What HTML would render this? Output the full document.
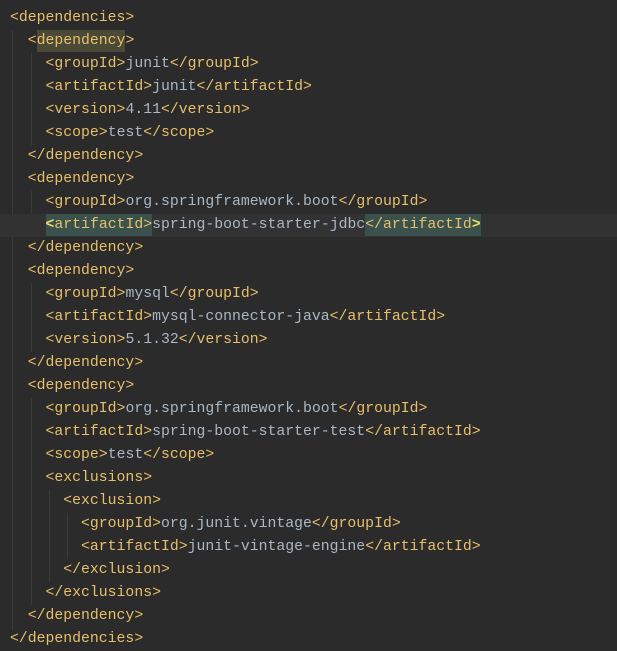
<!DOCTYPE html>
<html><head><style>
html,body{margin:0;padding:0;background:#2b2b2b;width:617px;height:651px;overflow:hidden}
#c{position:absolute;left:0;top:7px;width:617px;font-family:"Liberation Mono",monospace;font-size:14.8px;line-height:23px;color:#e8bf6a}
.l{height:23px;padding-left:10px;white-space:pre}
.t{color:#a9b7c6}
.cur{background:#323232}
.hl{background:#3b514d;padding:3px 0}
.hd{background:#4b4a36;padding:3px 0}
.b{color:#f0e060;font-weight:bold}
.g{position:absolute;width:1px;background:#3a3a3a}
</style></head><body>
<div class="g" style="left:12px;top:30px;height:600px"></div>
<div class="g" style="left:31px;top:53px;height:92px"></div>
<div class="g" style="left:31px;top:191px;height:46px"></div>
<div class="g" style="left:31px;top:283px;height:69px"></div>
<div class="g" style="left:31px;top:398px;height:207px"></div>
<div class="g" style="left:49px;top:490px;height:92px"></div>
<div class="g" style="left:67px;top:513px;height:46px"></div>
<div id="c"><div class="l">&lt;dependencies&gt;</div><div class="l">  &lt;<span class="hd">dependency</span>&gt;</div><div class="l">    &lt;groupId&gt;<span class="t">junit</span>&lt;/groupId&gt;</div><div class="l">    &lt;artifactId&gt;<span class="t">junit</span>&lt;/artifactId&gt;</div><div class="l">    &lt;version&gt;<span class="t">4.11</span>&lt;/version&gt;</div><div class="l">    &lt;scope&gt;<span class="t">test</span>&lt;/scope&gt;</div><div class="l">  &lt;/dependency&gt;</div><div class="l">  &lt;dependency&gt;</div><div class="l">    &lt;groupId&gt;<span class="t">org.springframework.boot</span>&lt;/groupId&gt;</div><div class="l cur">    <span class="hl"><span class="b">&lt;</span>artifactId&gt;</span><span class="t">spring-boot-starter-jdbc</span><span class="hl">&lt;/artifactId<span class="b">&gt;</span></span></div><div class="l">  &lt;/dependency&gt;</div><div class="l">  &lt;dependency&gt;</div><div class="l">    &lt;groupId&gt;<span class="t">mysql</span>&lt;/groupId&gt;</div><div class="l">    &lt;artifactId&gt;<span class="t">mysql-connector-java</span>&lt;/artifactId&gt;</div><div class="l">    &lt;version&gt;<span class="t">5.1.32</span>&lt;/version&gt;</div><div class="l">  &lt;/dependency&gt;</div><div class="l">  &lt;dependency&gt;</div><div class="l">    &lt;groupId&gt;<span class="t">org.springframework.boot</span>&lt;/groupId&gt;</div><div class="l">    &lt;artifactId&gt;<span class="t">spring-boot-starter-test</span>&lt;/artifactId&gt;</div><div class="l">    &lt;scope&gt;<span class="t">test</span>&lt;/scope&gt;</div><div class="l">    &lt;exclusions&gt;</div><div class="l">      &lt;exclusion&gt;</div><div class="l">        &lt;groupId&gt;<span class="t">org.junit.vintage</span>&lt;/groupId&gt;</div><div class="l">        &lt;artifactId&gt;<span class="t">junit-vintage-engine</span>&lt;/artifactId&gt;</div><div class="l">      &lt;/exclusion&gt;</div><div class="l">    &lt;/exclusions&gt;</div><div class="l">  &lt;/dependency&gt;</div><div class="l">&lt;/dependencies&gt;</div></div>
</body></html>
